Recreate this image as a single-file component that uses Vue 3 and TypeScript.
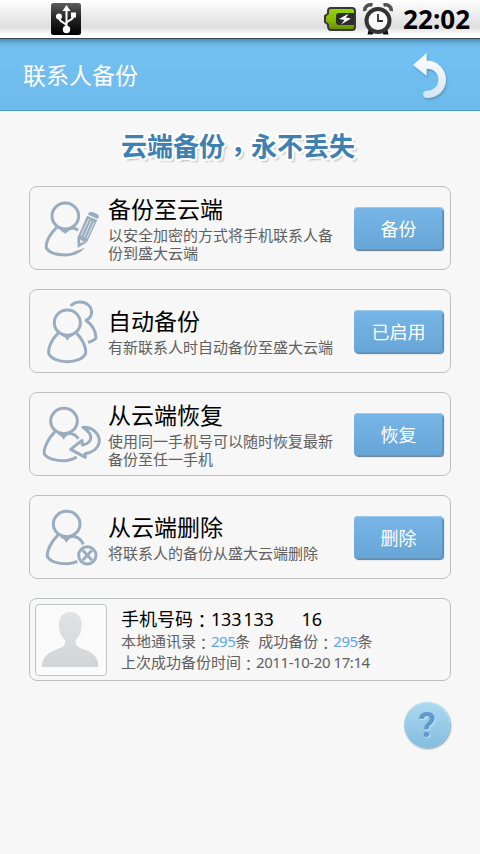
<script setup lang="ts">
import { ref } from 'vue'

interface Action {
  id: string
  title: string
  desc: string
  button: string
  viewBox: string
  paths: string[]
}

const actions = ref<Action[]>([
  {
    id: 'backup',
    title: '备份至云端',
    desc: '以安全加密的方式将手机联系人备份到盛大云端',
    button: '备份',
    viewBox: '30 21 234 246',
    paths: [
      'M136 69a40 39 0 1 1 0 78a40 39 0 1 1 0-78z',
      'M110 142C93 160 76 185 79 204C88 220 116 225 138 225C162 224 178 215 192 200',
      'M122 146L135 155L149 146L162 144L176 151',
    ],
  },
  {
    id: 'auto',
    title: '自动备份',
    desc: '有新联系人时自动备份至盛大云端',
    button: '已启用',
    viewBox: '30 18 234 246',
    paths: [
      'M142 78a39 38 0 1 1 0 76a39 38 0 1 1 0-76z',
      'M114 148C99 162 84 188 86 208C93 225 118 233 142 233C166 233 190 225 197 208C199 188 185 162 170 148',
      'M127 152L142 158L157 152',
      'M152 66C165 51 191 50 205 63C220 77 218 100 198 109C213 120 227 139 228 161C225 169 214 172 204 175',
    ],
  },
  {
    id: 'restore',
    title: '从云端恢复',
    desc: '使用同一手机号可以随时恢复最新备份至任一手机',
    button: '恢复',
    viewBox: '30 21 234 246',
    paths: [
      'M132 67a40 38 0 1 1 0 76a40 38 0 1 1 0-76z',
      'M105 137C87 155 70 184 73 204C81 218 108 224 131 224C148 224 160 219 170 213',
      'M117 142L131 150L145 142C158 142 169 149 175 158',
      'M189 124C217 123 239 143 238 168C234 187 217 200 195 203L196 214L152 190L186 163L187 177C205 175 214 163 212 150C210 139 200 132 189 124z',
    ],
  },
  {
    id: 'delete',
    title: '从云端删除',
    desc: '将联系人的备份从盛大云端删除',
    button: '删除',
    viewBox: '30 18 234 246',
    paths: [
      'M140 64a40 38 0 1 1 0 76a40 38 0 1 1 0-76z',
      'M115 134C96 152 80 181 82 200C91 215 118 221 141 221C153 221 163 218 172 214',
      'M124 139L139 146L155 139C171 139 184 150 190 163',
      'M202 170a26 26 0 1 1 0 52a26 26 0 1 1 0-52z',
      'M188 181L216 211M216 181L188 211',
    ],
  },
])

const info = { phoneA: '133', phoneB: '133', phoneC: '16', local: 295, saved: 295, time: '2011-10-20 17:14' }
</script>

<template>
  <div class="screen">
    <div class="status">
      <svg class="usb" width="30" height="32" viewBox="0 0 30 32">
        <defs>
          <linearGradient id="usbBg" x1="0" y1="0" x2="0" y2="1">
            <stop offset="0" stop-color="#5c5c5c" />
            <stop offset=".5" stop-color="#222" />
            <stop offset="1" stop-color="#000" />
          </linearGradient>
        </defs>
        <rect width="30" height="32" rx="2.5" fill="url(#usbBg)" />
        <path d="M15.500 5V26M15.500 22.500C14.500 19 8 20 8 14M15.500 20C17 16.500 22.500 18 22.500 12" fill="none" stroke="#fff" stroke-width="2" />
        <path d="M15.500 2L19.500 8H11.500z" fill="#fff" />
        <circle cx="8" cy="13.500" r="3" fill="#fff" />
        <rect x="20" y="9.500" width="5" height="5" fill="#fff" />
        <circle cx="15.500" cy="26.500" r="3.700" fill="#fff" />
      </svg>
      <div class="status-right">
        <svg width="34" height="26" viewBox="0 0 34 26">
          <defs>
            <linearGradient id="bat" x1="0" y1="0" x2="0" y2="1">
              <stop offset="0" stop-color="#98d800" />
              <stop offset=".5" stop-color="#87bd08" />
              <stop offset="1" stop-color="#648c00" />
            </linearGradient>
          </defs>
          <path d="M7 2H29Q32 2 32 5V21Q32 24 29 24H8Q5 24 5 20V18.500L2 16V10L5 7.500V5Q5 2 8 2z" fill="url(#bat)" stroke="#383838" stroke-width="2" />
          <path d="M31 7H16Q13 7 13 10V16Q13 19 16 19H31z" fill="#2c2c2c" />
          <path d="M24 8.500L16 13L21.500 14L18 18.500L28 12.500L22.500 11.500L25.500 8.500z" fill="#fff" />
        </svg>
        <svg class="alarm" width="30" height="32" viewBox="0 0 30 32">
          <path d="M6 25L4.500 31.500H9.500L12 28H18L20.500 31.500H25.500L24 25z" fill="#111" />
          <path d="M2 8C1 4 5 1 9.500 2M28 8C29 4 25 1 20.500 2" fill="none" stroke="#505050" stroke-width="3.600" />
          <circle cx="15" cy="17.500" r="11.500" fill="#fafafa" stroke="#343434" stroke-width="4" />
          <path d="M15 11V18H20" fill="none" stroke="#303030" stroke-width="1.800" />
        </svg>
        <span class="clock">22:02</span>
      </div>
    </div>

    <header class="header">
      <h1>联系人备份</h1>
      <svg class="back" width="36" height="48" viewBox="0 0 108 144">
        <defs>
          <linearGradient id="arrow" x1="0" y1="0" x2="0" y2="1">
            <stop offset="0" stop-color="#fff" />
            <stop offset="1" stop-color="#d4e5f5" />
          </linearGradient>
        </defs>
        <path d="M3 39L44 3V26C74 24 102 51 102 82C102 115 77 139 46 138C30 137 29 118 44 116C65 116 78 104 79 84C80 63 64 49 44 50V72z" fill="url(#arrow)" />
      </svg>
    </header>

    <main class="main">
      <h2 class="slogan">云端备份<span class="mid comma">，</span>永不丢失</h2>

      <section v-for="a in actions" :key="a.id" class="card">
        <svg class="icon" width="78" height="82" :viewBox="a.viewBox">
          <path v-for="(d, i) in a.paths" :key="i" :d="d" class="stroke" />
          <path v-if="a.id === 'backup'" d="M124 147H150L136 161z" class="fill" />
          <path v-if="a.id === 'auto'" d="M130 152H154L142 170z" class="fill" />
          <path v-if="a.id === 'restore'" d="M119 143H144L131 161z" class="fill" />
          <path v-if="a.id === 'delete'" d="M127 140H152L139 158z" class="fill" />
          <g v-if="a.id === 'backup'">
            <path d="M200 94L240 107L203 200L170 212L166 170z" class="gap" />
            <path d="M207 97Q220 92 237 107L234 117L204 104z" class="fill" />
            <path d="M201 107L232 120L201 187L172 173z" class="fill" />
            <path d="M206 118L183 167M214 122L192 171M223 126L200 175" class="groove" />
            <path d="M172 172L200 187L173 204z" class="fill" />
            <path d="M180 179L192 185L181 190z" class="gap" />
          </g>
        </svg>
        <div class="text">
          <h3>{{ a.title }}</h3>
          <p>{{ a.desc }}</p>
        </div>
        <button class="btn">{{ a.button }}</button>
      </section>

      <section class="card profile">
        <div class="avatar">
          <svg width="70" height="70" viewBox="0 0 210 210">
            <defs>
              <linearGradient id="person" x1="0" y1="0" x2="0" y2="1">
                <stop offset="0" stop-color="#e0e2e3" />
                <stop offset="1" stop-color="#d2d4d6" />
              </linearGradient>
            </defs>
            <path d="M103 21C125 21 138 38 137 61C136 82 129 96 119 105C116 119 125 127 140 132C169 140 188 156 187 186H17C18 157 37 141 65 132C81 127 90 119 87 105C77 96 70 82 69 61C68 38 81 21 103 21z" fill="url(#person)" />
          </svg>
        </div>
        <div class="details">
          <p class="phone">手机号码<span class="mid">：</span><span class="num">{{ info.phoneA }}</span><span class="num second">{{ info.phoneB }}</span><span class="num third">{{ info.phoneC }}</span></p>
          <p>本地通讯录<span class="mid">：</span><b>{{ info.local }}</b>条<span class="saved">成功备份</span><span class="mid">：</span><b>{{ info.saved }}</b>条</p>
          <p class="time">上次成功备份时间<span class="mid">：</span><span class="date">{{ info.time }}</span></p>
        </div>
      </section>

      <button class="help">?</button>
    </main>
  </div>
</template>

<style>
body {
  margin: 0;
  background: #f7f7f7;
}
</style>

<style scoped>
.screen {
  width: 480px;
  height: 854px;
  overflow: hidden;
  background: #f7f7f7;
  color: #000;
  font-family: "Noto Sans", "Noto Sans CJK SC", sans-serif;
}
h1, h2, h3, p {
  margin: 0;
  font-weight: 400;
}
.mid {
  display: inline-block;
  font-family: "Noto Sans CJK TC", sans-serif;
  line-height: 1;
  vertical-align: -2px;
}
.comma {
  vertical-align: -5px;
}
.status {
  box-sizing: border-box;
  height: 39px;
  display: flex;
  justify-content: space-between;
  align-items: flex-start;
  padding: 3px 9px 0 51px;
  border-bottom: 1px solid #34464f;
  background: linear-gradient(#fff 0, #f0f0f0 30%, #dedede 72%, #fafafa 88%, #fff 100%);
}
.status-right {
  display: flex;
  align-items: flex-start;
}
.status-right svg:first-child {
  margin-top: 3px;
}
.alarm {
  margin: 0 10px 0 6px;
}
.clock {
  width: 68px;
  font: 700 26px/32px "Noto Sans", sans-serif;
  letter-spacing: 0.1px;
  white-space: nowrap;
}
.header {
  box-sizing: border-box;
  height: 72px;
  display: flex;
  justify-content: space-between;
  align-items: center;
  padding: 1px 32px 0 23px;
  border-bottom: 1px solid #4b9dd0;
  background: linear-gradient(#4b8db5 0, #65afdd 4px, #73c0f3 9px, #6cbbec 100%);
  color: #fff;
}
.header h1 {
  font-size: 23px;
  line-height: 32px;
}
.back {
  margin-top: 2px;
  filter: drop-shadow(1px 2px 1px #4687b099);
}
.main {
  display: flex;
  flex-direction: column;
  gap: 19px;
  padding: 16px 29px 0;
}
.slogan {
  height: 39px;
  color: #3d80b3;
  font-size: 26px;
  font-weight: 700;
  line-height: 39px;
  text-align: center;
  padding-right: 4px;
  text-shadow: -2px 0 #fff, 2px 0 #fff, 0 -2px #fff, 0 2px #fff, -2px -2px #fff, 2px 2px #fff, 2px -2px #fff, -2px 2px #fff, 3px 3px 2px #bbb;
}
.card {
  box-sizing: border-box;
  height: 84px;
  display: flex;
  align-items: center;
  padding-right: 7px;
  border: 1px solid #bcc0c0;
  border-radius: 8px;
}
.slogan + .card {
  margin-top: 1px;
}
.icon {
  flex: none;
}
.stroke {
  fill: none;
  stroke: #9aacbf;
  stroke-width: 9;
  stroke-linejoin: round;
}
.fill {
  fill: #9aacbf;
}
.gap {
  fill: #f7f7f7;
}
.groove {
  fill: none;
  stroke: #f7f7f7;
  stroke-width: 2.4;
}
.text {
  width: 226px;
  flex: none;
  padding-bottom: 2px;
}
.text h3 {
  font-size: 23px;
  line-height: 34px;
}
.text p {
  color: #606060;
  font-size: 15px;
  line-height: 18px;
}
.btn {
  width: 89px;
  height: 43px;
  margin: 0 0 0 auto;
  padding: 1px 0 0;
  border: 0;
  border-radius: 4px;
  background: linear-gradient(#78b6e8, #68a5d7);
  box-shadow: inset 0 1px #9bcaf0, inset -1px -1px #6296be, 1px 1px 1px #607b8e;
  color: #fff;
  font: 18px/26px "Noto Sans", "Noto Sans CJK SC", sans-serif;
}
.profile {
  height: 83px;
}
.avatar {
  width: 70px;
  height: 70px;
  margin-left: 5px;
  border: 1px solid #c2c4c4;
  border-radius: 4px;
  background: #fafafa;
}
.details {
  margin-left: 14px;
  padding-top: 2px;
  white-space: nowrap;
}
.details p {
  height: 21px;
  color: #606060;
  font-size: 15px;
  line-height: 21px;
}
.details .phone {
  height: 23px;
  color: #000;
  font-size: 18px;
  line-height: 23px;
}
.details b {
  color: #62a6df;
  font-weight: 400;
  letter-spacing: -0.5px;
}
.date {
  letter-spacing: -0.43px;
}
.num {
  letter-spacing: -0.2px;
}
.second {
  margin-left: 2px;
}
.third {
  margin-left: 28px;
}
.saved {
  margin-left: 8px;
}
.help {
  width: 46px;
  height: 46px;
  align-self: flex-end;
  margin: 2px 1px 0 0;
  padding: 2px 0 0;
  border: 0;
  border-radius: 50%;
  background: linear-gradient(#add9f1, #83bddf);
  box-shadow: inset 0 1px #b9e2f6, 1px 1px 2px #779aac;
  color: #6299cd;
  font: 700 35px/44px Roboto, sans-serif;
  text-shadow: 1px 1px #c4e4f5;
}
</style>
